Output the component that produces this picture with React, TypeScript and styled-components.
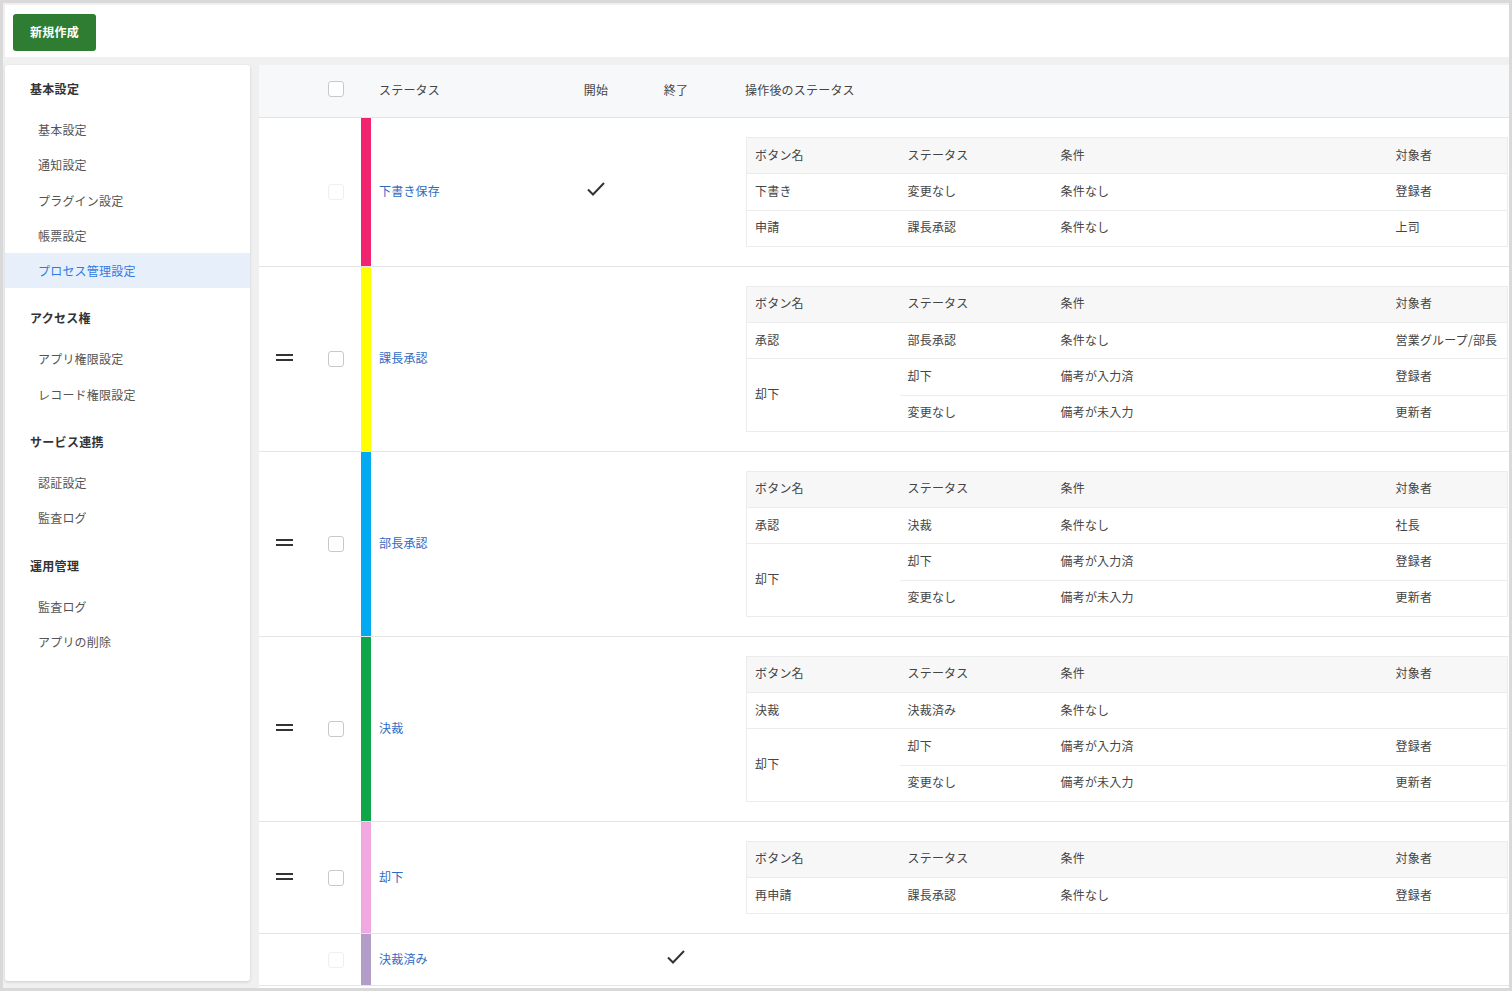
import React from "react";
import styled, { createGlobalStyle } from "styled-components";

const Global = createGlobalStyle`
  html, body { margin: 0; padding: 0; }
  body {
    font-family: "Noto Sans CJK JP", "Noto Sans", sans-serif;
    font-size: 12px;
    color: #444;
    background: #d8d8d8;
  }
  * { box-sizing: border-box; }
`;

const Frame = styled.div`
  width: 1512px;
  height: 991px;
  border: 3px solid #d9d9d9;
  background: #f0f0f0;
  padding: 2px 0 0 2px;
  display: flex;
  flex-direction: column;
  overflow: hidden;
`;

const Toolbar = styled.div`
  height: 52px;
  background: #fff;
  padding: 9px 0 0 8px;
  flex-shrink: 0;
`;

const PrimaryButton = styled.button`
  width: 83px;
  height: 37px;
  border: none;
  border-radius: 3px;
  background: #2e7d32;
  color: #fff;
  font-family: inherit;
  font-size: 12px;
  font-weight: 700;
  letter-spacing: 0.2px;
  padding: 0 0 3px;
  cursor: pointer;
`;

const Body = styled.div`
  flex: 1;
  display: flex;
  gap: 9px;
  padding-top: 8px;
  min-height: 0;
`;

const Sidebar = styled.nav`
  width: 245px;
  flex-shrink: 0;
  background: #fff;
  border-radius: 3px;
  box-shadow: 0 1px 3px rgba(0, 0, 0, 0.15);
  padding-top: 6px;
  margin-bottom: 7px;
`;

const Group = styled.div`
  & + & {
    margin-top: 12px;
  }
`;

const GroupTitle = styled.div`
  height: 35px;
  line-height: 35px;
  padding-left: 25px;
  margin-bottom: 6px;
  font-weight: 700;
  color: #333;
  letter-spacing: 0.3px;
`;

const NavItem = styled.div<{ $active?: boolean }>`
  height: 35.3px;
  line-height: 35px;
  padding-left: 33px;
  color: ${(p) => (p.$active ? "#2f7be2" : "#555")};
  background: ${(p) => (p.$active ? "#e7effb" : "transparent")};
  letter-spacing: 0.2px;
`;

const Main = styled.main`
  flex: 1;
  background: #fff;
  display: flex;
  flex-direction: column;
  min-width: 0;
`;

const COLS = "51px 51px 10px 185px 80px 80px 1fr";

const HeaderRow = styled.div`
  display: grid;
  grid-template-columns: ${COLS};
  height: 53px;
  padding-bottom: 4px;
  background: #f7f8fa;
  border-bottom: 1px solid #e1e3e6;
  align-items: center;
  color: #444;
`;

const HeadCell = styled.div<{ $center?: boolean; $pad?: number }>`
  display: flex;
  align-items: center;
  justify-content: ${(p) => (p.$center ? "center" : "flex-start")};
  padding-left: ${(p) => p.$pad ?? 0}px;
  letter-spacing: 0.2px;
`;

const Row = styled.div<{ $minH?: number }>`
  display: grid;
  grid-template-columns: ${COLS};
  border-bottom: 1px solid #e3e4e6;
  min-height: ${(p) => p.$minH ?? 0}px;
`;

const Cell = styled.div<{ $center?: boolean; $lift?: number }>`
  display: flex;
  align-items: center;
  justify-content: ${(p) => (p.$center ? "center" : "flex-start")};
  padding-bottom: ${(p) => p.$lift ?? 0}px;
`;

const ColorBar = styled.div<{ $color: string }>`
  background: ${(p) => p.$color};
`;

const StatusName = styled.a`
  padding: 0 0 3px 8px;
  color: #2f6bc4;
  text-decoration: none;
  letter-spacing: 0.2px;
  display: flex;
  align-items: center;
`;

const AfterCell = styled.div`
  padding: 19px 1px 19px 30px;
  display: flex;
  align-items: center;
`;

const Checkbox = styled.span<{ $disabled?: boolean }>`
  width: 16px;
  height: 16px;
  border-radius: 3px;
  border: 1px solid ${(p) => (p.$disabled ? "#efefef" : "#c9c9c9")};
  background: #fff;
  display: inline-block;
`;

const Handle = styled.span`
  width: 17px;
  height: 7px;
  margin-bottom: 3px;
  border-top: 2px solid #333;
  border-bottom: 2px solid #333;
  display: inline-block;
`;

const SubTable = styled.table`
  width: 100%;
  table-layout: fixed;
  border-collapse: collapse;
  border: 1px solid #ececec;
  color: #444;
`;

const SubHeadRow = styled.tr`
  background: #f7f7f7;
`;

const SubTh = styled.th<{ $w?: number }>`
  ${(p) => (p.$w ? `width: ${p.$w}px;` : "")}
  height: 36.25px;
  padding: 0 8px 3px;
  text-align: left;
  font-weight: 400;
  border-bottom: 1px solid #ececec;
  letter-spacing: 0.2px;
`;

const SubTd = styled.td`
  height: 36.25px;
  padding: 0 8px 3px;
  border-bottom: 1px solid #ececec;
  vertical-align: middle;
  letter-spacing: 0.2px;
  white-space: nowrap;
`;

const Check = () => (
  <svg width="20" height="16" viewBox="0 0 20 16">
    <polyline points="2,8.5 7,13.5 18,2" fill="none" stroke="#333" strokeWidth="2" />
  </svg>
);

type Action = {
  button: string;
  rows: { status: string; cond: string; target: string }[];
};

type Status = {
  name: string;
  color: string;
  draggable: boolean;
  start?: boolean;
  end?: boolean;
  actions: Action[];
};

const statuses: Status[] = [
  {
    name: "下書き保存",
    color: "#f0246f",
    draggable: false,
    start: true,
    actions: [
      { button: "下書き", rows: [{ status: "変更なし", cond: "条件なし", target: "登録者" }] },
      { button: "申請", rows: [{ status: "課長承認", cond: "条件なし", target: "上司" }] },
    ],
  },
  {
    name: "課長承認",
    color: "#ffff00",
    draggable: true,
    actions: [
      { button: "承認", rows: [{ status: "部長承認", cond: "条件なし", target: "営業グループ/部長" }] },
      {
        button: "却下",
        rows: [
          { status: "却下", cond: "備考が入力済", target: "登録者" },
          { status: "変更なし", cond: "備考が未入力", target: "更新者" },
        ],
      },
    ],
  },
  {
    name: "部長承認",
    color: "#03a9f1",
    draggable: true,
    actions: [
      { button: "承認", rows: [{ status: "決裁", cond: "条件なし", target: "社長" }] },
      {
        button: "却下",
        rows: [
          { status: "却下", cond: "備考が入力済", target: "登録者" },
          { status: "変更なし", cond: "備考が未入力", target: "更新者" },
        ],
      },
    ],
  },
  {
    name: "決裁",
    color: "#0fa64a",
    draggable: true,
    actions: [
      { button: "決裁", rows: [{ status: "決裁済み", cond: "条件なし", target: "" }] },
      {
        button: "却下",
        rows: [
          { status: "却下", cond: "備考が入力済", target: "登録者" },
          { status: "変更なし", cond: "備考が未入力", target: "更新者" },
        ],
      },
    ],
  },
  {
    name: "却下",
    color: "#f1a7df",
    draggable: true,
    actions: [{ button: "再申請", rows: [{ status: "課長承認", cond: "条件なし", target: "登録者" }] }],
  },
  {
    name: "決裁済み",
    color: "#b19dc8",
    draggable: false,
    end: true,
    actions: [],
  },
];

const nav = [
  { title: "基本設定", items: ["基本設定", "通知設定", "プラグイン設定", "帳票設定", "プロセス管理設定"] },
  { title: "アクセス権", items: ["アプリ権限設定", "レコード権限設定"] },
  { title: "サービス連携", items: ["認証設定", "監査ログ"] },
  { title: "運用管理", items: ["監査ログ", "アプリの削除"] },
];

const ActionTable = ({ actions }: { actions: Action[] }) => (
  <SubTable>
    <thead>
      <SubHeadRow>
        <SubTh $w={153}>ボタン名</SubTh>
        <SubTh $w={153}>ステータス</SubTh>
        <SubTh $w={335}>条件</SubTh>
        <SubTh>対象者</SubTh>
      </SubHeadRow>
    </thead>
    <tbody>
      {actions.map((a, i) =>
        a.rows.map((r, j) => (
          <tr key={`${i}-${j}`}>
            {j === 0 && <SubTd rowSpan={a.rows.length}>{a.button}</SubTd>}
            <SubTd>{r.status}</SubTd>
            <SubTd>{r.cond}</SubTd>
            <SubTd>{r.target}</SubTd>
          </tr>
        ))
      )}
    </tbody>
  </SubTable>
);

export default function App() {
  return (
    <>
      <Global />
      <Frame>
        <Toolbar>
          <PrimaryButton>新規作成</PrimaryButton>
        </Toolbar>
        <Body>
          <Sidebar>
            {nav.map((g) => (
              <Group key={g.title}>
                <GroupTitle>{g.title}</GroupTitle>
                {g.items.map((it) => (
                  <NavItem key={it} $active={it === "プロセス管理設定"}>
                    {it}
                  </NavItem>
                ))}
              </Group>
            ))}
          </Sidebar>
          <Main>
            <HeaderRow>
              <HeadCell />
              <HeadCell $center>
                <Checkbox />
              </HeadCell>
              <HeadCell />
              <HeadCell $pad={8}>ステータス</HeadCell>
              <HeadCell $center>開始</HeadCell>
              <HeadCell $center>終了</HeadCell>
              <HeadCell $pad={29}>操作後のステータス</HeadCell>
            </HeaderRow>
            {statuses.map((s) => (
              <Row key={s.name} $minH={s.actions.length ? 0 : 52}>
                <Cell $center>{s.draggable && <Handle />}</Cell>
                <Cell $center>
                  <Checkbox $disabled={!s.draggable} />
                </Cell>
                <ColorBar $color={s.color} />
                <StatusName href="#">{s.name}</StatusName>
                <Cell $center $lift={5}>{s.start && <Check />}</Cell>
                <Cell $center $lift={5}>{s.end && <Check />}</Cell>
                {s.actions.length ? (
                  <AfterCell>
                    <ActionTable actions={s.actions} />
                  </AfterCell>
                ) : (
                  <Cell />
                )}
              </Row>
            ))}
          </Main>
        </Body>
      </Frame>
    </>
  );
}
